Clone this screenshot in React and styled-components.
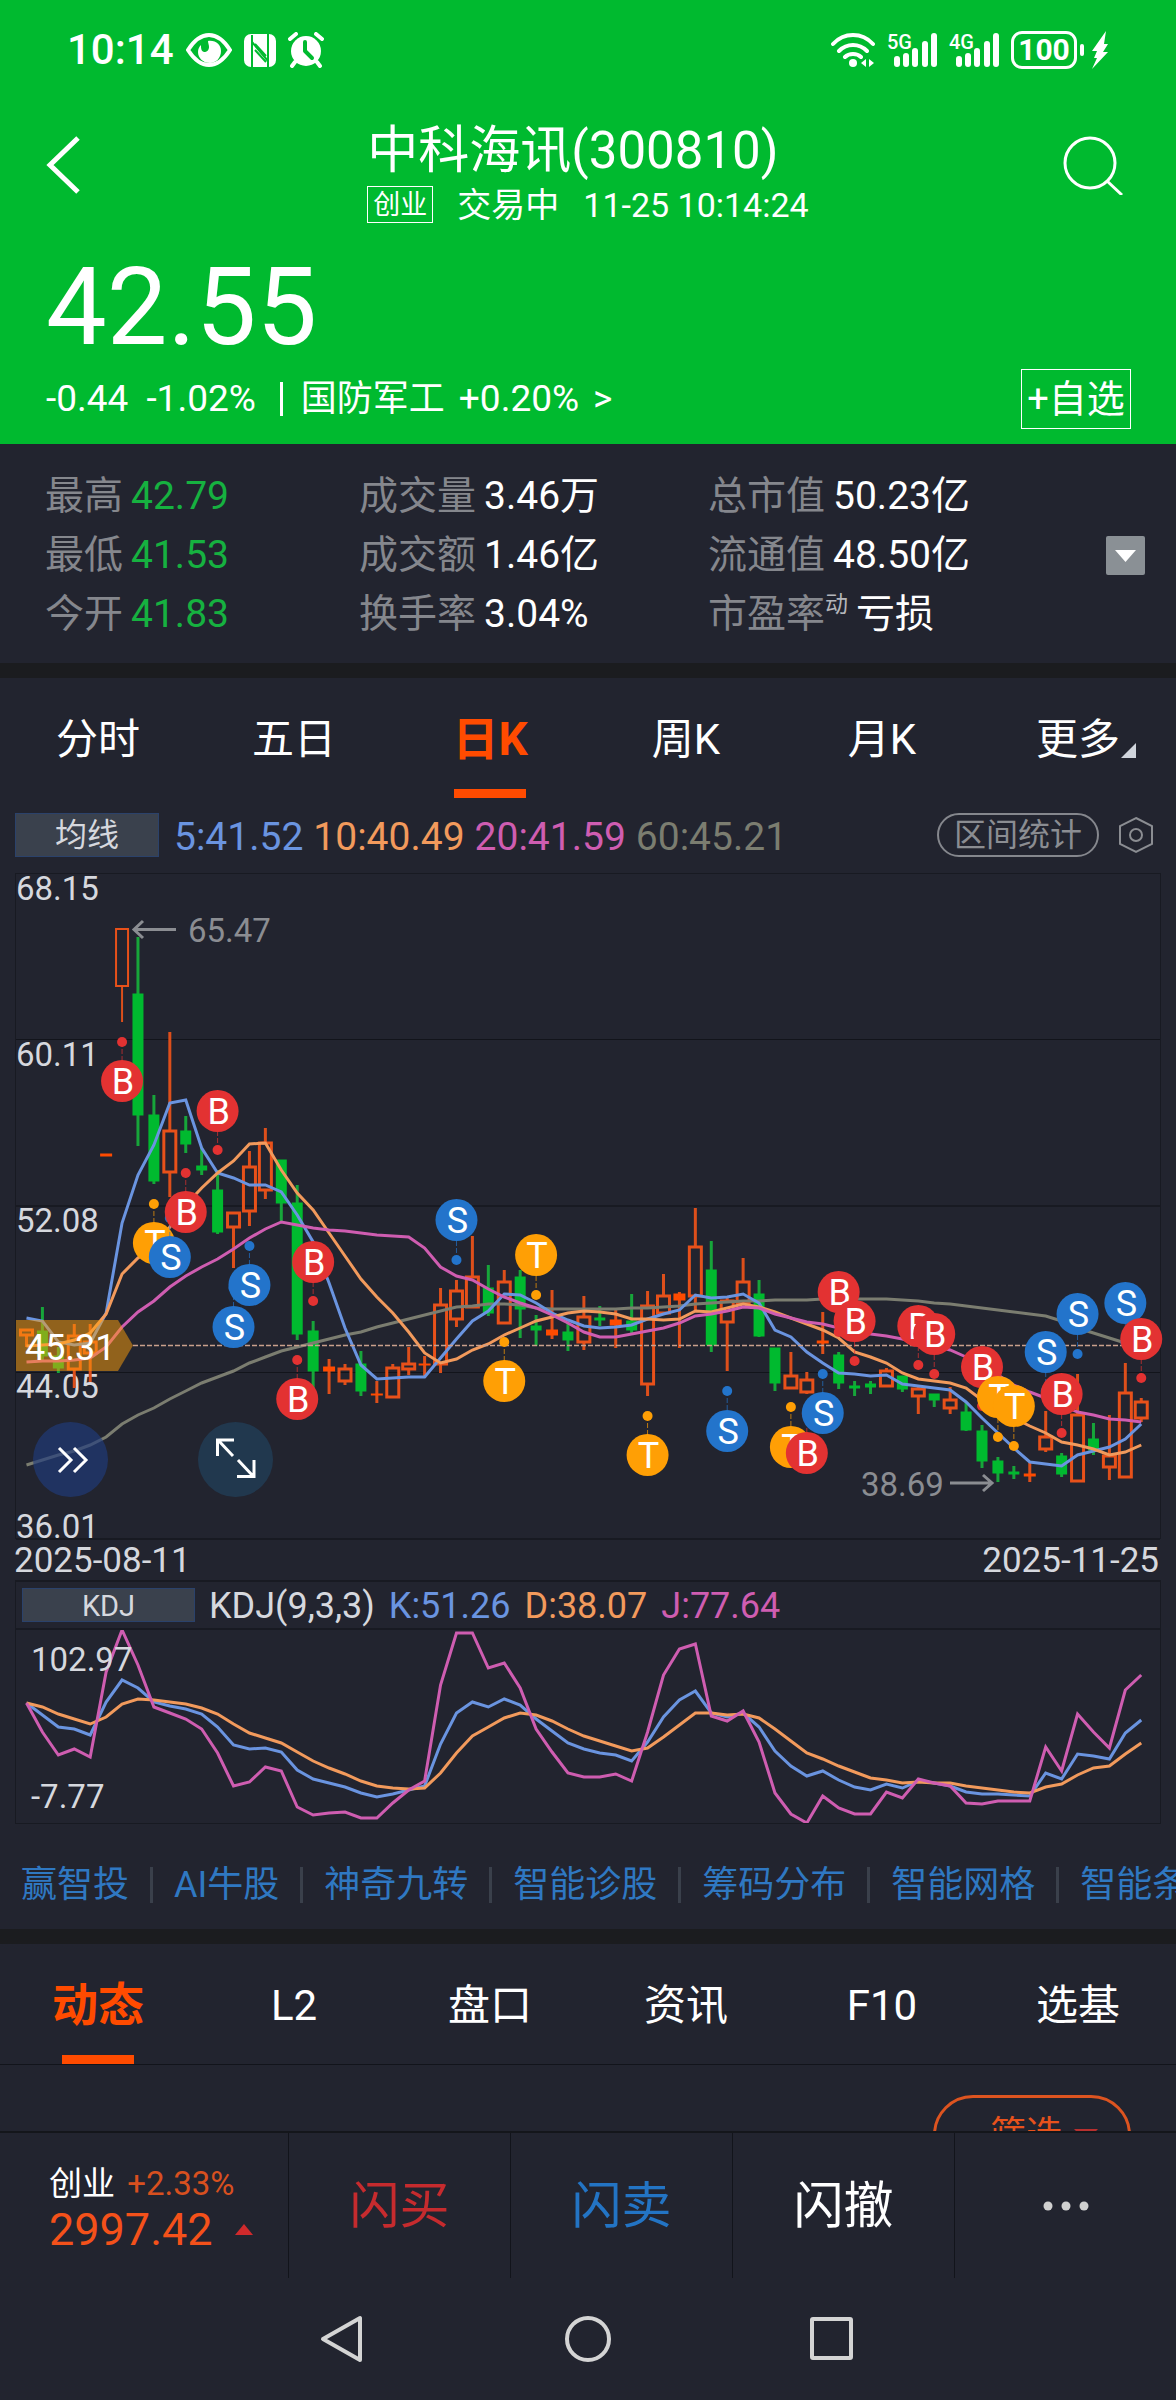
import { Fragment } from 'react';
import styled, { createGlobalStyle } from 'styled-components';

const GREEN = '#00ba2f';
const ORANGE = '#ff4b00';
const RED = '#e33232';
const BLUE = '#2374cb';
const AMBER = '#ff9f05';

const STEP = 15.925;
const xAt = i => 26.5 + i * STEP;

// kind, high, body top, body bottom, low (u = hollow, f = filled, d = down)
const candles = [
    ['u', 460, 460, 465, 477], ['d', 437, 461, 486, 490], ['d', 477, 486, 498, 503],
    ['u', 454, 466, 499, 518], ['u', 454, 472, 483, 512], ['f', 284, 284, 286, 286],
    ['u', 59, 59, 116, 152], ['d', 67, 124, 245, 276], ['d', 225, 245, 311, 314],
    ['u', 162, 261, 302, 327], ['d', 246, 261, 274, 283], ['d', 277, 296, 300, 305],
    ['d', 300, 320, 362, 364], ['u', 343, 343, 357, 398], ['u', 281, 297, 341, 356],
    ['u', 258, 273, 320, 329], ['d', 290, 290, 333, 353], ['d', 315, 333, 464, 470],
    ['d', 451, 461, 501, 518], ['f', 489, 497, 501, 524], ['u', 494, 499, 511, 515],
    ['d', 481, 494, 521, 526], ['f', 511, 524, 525, 533], ['u', 494, 498, 527, 528],
    ['u', 477, 494, 499, 505], ['f', 486, 494, 495, 508], ['u', 418, 435, 494, 503],
    ['u', 410, 421, 449, 457], ['u', 366, 407, 437, 438], ['d', 395, 418, 443, 446],
    ['u', 400, 412, 453, 453], ['d', 400, 407, 439, 468], ['d', 445, 456, 460, 476],
    ['f', 420, 460, 465, 469], ['d', 453, 462, 470, 481], ['u', 426, 447, 472, 480],
    ['d', 436, 448, 450, 456], ['f', 440, 450, 455, 478], ['d', 424, 451, 460, 463],
    ['u', 421, 436, 514, 526], ['u', 404, 426, 443, 444], ['f', 422, 424, 430, 478],
    ['u', 338, 377, 426, 440], ['d', 371, 400, 475, 482], ['u', 426, 431, 452, 501],
    ['u', 388, 412, 433, 434], ['d', 410, 424, 466, 467], ['d', 478, 478, 513, 521],
    ['u', 482, 506, 518, 518], ['u', 502, 510, 522, 524], ['f', 442, 471, 473, 484],
    ['d', 482, 485, 513, 519], ['d', 511, 516, 518, 526], ['d', 511, 514, 517, 524],
    ['u', 498, 501, 516, 517], ['d', 506, 506, 519, 522], ['u', 515, 519, 526, 544],
    ['d', 524, 524, 530, 537], ['u', 517, 530, 538, 544], ['d', 533, 542, 560, 561],
    ['d', 555, 561, 591, 598], ['d', 587, 591, 603, 612], ['d', 596, 602, 604, 609],
    ['f', 593, 604, 606, 612], ['u', 541, 567, 579, 582], ['d', 583, 586, 604, 607],
    ['u', 504, 545, 611, 611], ['d', 553, 569, 580, 585], ['u', 545, 586, 597, 610],
    ['u', 493, 523, 607, 607], ['u', 528, 532, 548, 552],
];

const averages = [
    {
        color: '#7b7d70',
        points: [595, 590, 585, 581, 575, 567, 554, 545, 538, 529, 521, 513, 507, 501, 493, 487, 481, 477, 473, 469, 465, 462, 457, 453, 449, 445, 441, 437, 436, 434, 434, 435, 438, 439, 439, 439, 439, 439, 438, 438, 437, 436, 434, 433, 432, 431, 431, 430, 430, 430, 429, 429, 429, 429, 429, 430, 431, 433, 434, 436, 438, 440, 442, 444, 446, 451, 458, 463, 468, 473, 478],
    },
    {
        color: '#6a94e0',
        points: [448, 451, 472, 475, 473, 443, 353, 305, 275, 233, 230, 278, 303, 308, 315, 315, 322, 345, 372, 413, 458, 495, 509, 508, 507, 507, 488, 469, 451, 441, 424, 425, 433, 443, 450, 456, 458, 457, 455, 449, 444, 440, 425, 428, 427, 424, 433, 460, 467, 482, 493, 503, 504, 506, 505, 514, 516, 518, 520, 532, 548, 563, 578, 592, 594, 596, 585, 581, 577, 569, 554],
    },
    {
        color: '#f29a5c',
        points: [476, 475, 474, 470, 463, 444, 404, 388, 377, 357, 335, 318, 303, 291, 274, 273, 300, 323, 340, 363, 386, 409, 427, 443, 462, 483, 493, 489, 480, 474, 465, 458, 451, 447, 443, 441, 442, 444, 449, 449, 450, 449, 441, 442, 438, 434, 437, 442, 448, 454, 460, 468, 482, 487, 493, 503, 509, 511, 513, 518, 530, 540, 548, 556, 563, 572, 575, 579, 585, 582, 575],
    },
    {
        color: '#cf5db1',
        points: [492, 491, 491, 490, 488, 477, 457, 442, 431, 417, 406, 397, 389, 379, 368, 359, 352, 355, 358, 360, 361, 363, 365, 366, 367, 378, 397, 406, 410, 419, 427, 433, 438, 445, 453, 462, 467, 467, 464, 461, 458, 453, 446, 444, 441, 437, 438, 444, 448, 452, 454, 458, 462, 464, 466, 469, 473, 476, 480, 487, 495, 505, 515, 522, 528, 535, 542, 545, 549, 550, 552],
    },
];

// candle index, letter, badge centre, dot centre
const marks = [
    [6, 'B', 211, 172], [8, 'T', 373, 334], [9, 'S', 387, 348], [10, 'B', 342, 303],
    [12, 'B', 241, 280], [13, 'S', 457, 418], [14, 'S', 415, 376], [17, 'B', 529, 490],
    [18, 'B', 392, 431], [27, 'S', 350, 390], [30, 'T', 511, 472], [32, 'T', 385, 425],
    [39, 'T', 585, 546], [44, 'S', 561, 521], [48, 'T', 577, 537], [49, 'B', 583, 544],
    [50, 'S', 543, 504], [51, 'B', 422, 462], [52, 'B', 451, 491], [56, 'B', 456, 495],
    [57, 'B', 464, 504], [60, 'B', 497, 536], [61, 'T', 527, 567], [62, 'T', 536, 576],
    [64, 'S', 482, 521], [65, 'B', 524, 563], [66, 'S', 444, 484], [69, 'S', 433, 472],
    [70, 'B', 469, 508],
];
const markColors = { B: RED, S: BLUE, T: AMBER };

const kdj = [
    {
        color: '#6a94e0',
        points: [74, 86, 98, 100, 106, 73, 51, 59, 73, 77, 80, 85, 98, 116, 120, 119, 123, 141, 150, 154, 158, 164, 168, 165, 161, 157, 115, 84, 73, 78, 70, 76, 90, 102, 114, 120, 124, 126, 132, 113, 88, 71, 62, 84, 88, 84, 98, 122, 137, 147, 142, 151, 158, 161, 155, 159, 152, 154, 157, 163, 165, 165, 166, 167, 144, 150, 125, 127, 130, 104, 91],
    },
    {
        color: '#f29a5c',
        points: [74, 78, 85, 90, 95, 88, 75, 70, 71, 73, 75, 79, 85, 95, 104, 109, 114, 123, 132, 139, 145, 152, 157, 159, 160, 159, 144, 124, 107, 98, 89, 84, 86, 92, 100, 107, 112, 117, 122, 119, 108, 96, 84, 84, 86, 85, 89, 100, 112, 124, 130, 137, 143, 149, 151, 154, 153, 154, 154, 157, 159, 161, 163, 164, 158, 155, 146, 139, 137, 125, 114],
    },
    {
        color: '#cf5db1',
        points: [74, 103, 126, 120, 128, 43, 1, 36, 78, 84, 90, 100, 124, 157, 153, 138, 142, 178, 186, 184, 183, 189, 189, 174, 161, 152, 56, 4, 4, 39, 34, 59, 100, 123, 144, 148, 148, 145, 152, 103, 46, 20, 15, 87, 92, 82, 113, 164, 185, 194, 167, 179, 185, 185, 163, 169, 150, 154, 157, 174, 175, 172, 172, 172, 118, 142, 85, 103, 119, 61, 46],
    },
];

const toPoints = list => list.map((y, i) => `${xAt(i)},${y}`).join(' ');

const stats = [
    [['最高', '42.79', true], ['最低', '41.53', true], ['今开', '41.83', true]],
    [['成交量', '3.46万'], ['成交额', '1.46亿'], ['换手率', '3.04%']],
    [['总市值', '50.23亿'], ['流通值', '48.50亿'], ['市盈率', '亏损', false, '动']],
];

const periods = ['分时', '五日', '日K', '周K', '月K', '更多'];
const sections = ['动态', 'L2', '盘口', '资讯', 'F10', '选基'];
const tools = ['赢智投', 'AI牛股', '神奇九转', '智能诊股', '筹码分布', '智能网格', '智能条件单'];

const Signal = ({ label }) => (
    <svg width="50" height="36" viewBox="0 0 50 36" fill="#fff" overflow="visible">
        <SignalText x="0" y="17">{label}</SignalText>
        <rect x="7" y="24" width="6" height="11" rx="3" />
        <rect x="16" y="21" width="6" height="14" rx="3" />
        <rect x="25" y="16" width="6" height="19" rx="3" />
        <rect x="35" y="9" width="6" height="26" rx="3" />
        <rect x="44" y="1" width="6" height="34" rx="3" />
    </svg>
);

const StatusIcons = () => (
    <>
        <svg width="46" height="34" viewBox="0 0 46 34">
            <path d="M2 17C9 6 16 2 23 2s14 4 21 15c-7 11-14 15-21 15S9 28 2 17z" fill="none" stroke="#fff" strokeWidth="4" />
            <path d="M22 8c8-1 13 4 13 10 0 7-5 12-11 12-7 0-12-5-12-11 0-3 1-5 3-7 0 3 0 6 3 7 3 0 5-2 5-5 0-2-1-4-1-6z" fill="#fff" />
        </svg>
        <svg width="32" height="34" viewBox="0 0 32 34">
            <rect x="0" y="1" width="32" height="33" rx="7" fill="#fff" />
            <path d="M8 34V2M8 9l16 19M24 34V1" fill="none" stroke={GREEN} strokeWidth="2" />
            <path d="M11 17l11 12M11 11l11 12" fill="none" stroke={GREEN} strokeWidth="2" />
        </svg>
        <svg width="36" height="36" viewBox="0 0 36 36">
            <circle cx="18" cy="19" r="15" fill="#fff" />
            <path d="M2 7l6-5M34 7l-6-5M7 30l-3 4M29 30l3 4" stroke="#fff" strokeWidth="4" strokeLinecap="round" />
            <path d="M17 10v9l7 7" fill="none" stroke={GREEN} strokeWidth="4" strokeLinecap="round" strokeLinejoin="round" />
        </svg>
    </>
);

const PriceChart = () => (
    <ChartBox>
        <Plot viewBox="0 0 1176 672" role="img" aria-label="日K线">
            <g stroke="#181a22" fill="none">
                <rect x="15.5" y="3.5" width="1145" height="665" />
                <path d="M16 169.5H1160M16 502.5H1160" stroke="#12141b" />
                <path d="M16 336H1160M16 669H1160" strokeWidth="2" />
            </g>
            <AxisText x="16" y="30">68.15</AxisText>
            <AxisText x="16" y="196">60.11</AxisText>
            <AxisText x="16" y="362">52.08</AxisText>
            <AxisText x="16" y="528">44.05</AxisText>
            <AxisText x="16" y="668">36.01</AxisText>
            {candles.map(([kind, high, top, bottom, low], i) => {
                const x = xAt(i);
                const up = kind !== 'd';
                return (
                    <Fragment key={i}>
                        <path
                            d={`M${x} ${high}V${top}M${x} ${bottom}V${low}`}
                            stroke={up ? '#dd4f1b' : '#17a53a'}
                            strokeWidth={i === 6 ? 2 : 3}
                        />
                        {kind === 'u'
                            ? <rect x={x - 6} y={top} width="12" height={bottom - top} fill="none" stroke="#e8511a" strokeWidth={i === 6 ? 2 : 3} />
                            : <rect x={x - (up ? 6 : 5.5)} y={top - 0.5} width={up ? 12 : 11} height={bottom - top + 1} fill={up ? ORANGE : GREEN} />}
                    </Fragment>
                );
            })}
            {averages.map(line => (
                <polyline key={line.color} points={toPoints(line.points)} fill="none" stroke={line.color} strokeWidth="3" />
            ))}
            <path d="M133 475.5H1160" stroke="#c9a08c" strokeWidth="1.4" strokeDasharray="5 2" />
            <g stroke="#8b8d92" strokeWidth="3" fill="none">
                <path d="M176 59.5H134M143 51l-9 8.500l9 8.500" />
                <path d="M950 613H992M983 605l9 8l-9 8" />
            </g>
            <AxisText $dim x="188" y="72">65.47</AxisText>
            <AxisText $dim x="861" y="626">38.69</AxisText>
            {marks.map(([i, letter, y, dot]) => (
                <g key={i} fill={markColors[letter]}>
                    <path d={`M${xAt(i)} ${dot}V${y}`} stroke={markColors[letter]} strokeDasharray="5 2" opacity="0.7" />
                    <circle cx={xAt(i)} cy={dot} r="5" />
                    <circle cx={xAt(i)} cy={y} r="21" />
                    <MarkText x={xAt(i) + 1} y={y + 13}>{letter}</MarkText>
                </g>
            ))}
            <path d="M16 450H118L133 475.500L118 501H16z" fill="rgba(255, 160, 10, 0.5)" />
            <TagText x="25" y="490">45.31</TagText>
        </Plot>
        <RoundButton $left={33} $tint="rgba(32, 60, 125, 0.65)" aria-label="展开">
            <svg width="75" height="75" viewBox="0 0 75 75" fill="none" stroke="#fff" strokeWidth="3">
                <path d="M26 26l12 12l-12 12M41 26l12 12l-12 12" />
            </svg>
        </RoundButton>
        <RoundButton $left={198} $tint="rgba(34, 70, 100, 0.6)" aria-label="全屏">
            <svg width="75" height="75" viewBox="0 0 75 75" fill="none" stroke="#fff" strokeWidth="3">
                <path d="M36 18H19.500V34M20 18L35 34M39 54.500H56V38M55 54L40 38" />
            </svg>
        </RoundButton>
    </ChartBox>
);

const TabBar = ({ items, active, more, line }) => (
    <Tabs $line={line}>
        {items.map(item => (
            <Tab key={item} $active={item === active}>
                <TabLabel>
                    {item}
                    {item === more && (
                        <Corner width="15" height="15" viewBox="0 0 15 15"><path d="M15 0V15H0z" fill="#d0d4dc" /></Corner>
                    )}
                </TabLabel>
                <TabLine $active={item === active} />
            </Tab>
        ))}
    </Tabs>
);

const App = () => {
    return (
        <Page>
            <GlobalStyle />
            <Header>
                <StatusBar>
                    <StatusGroup>
                        <Clock>10:14</Clock>
                        <StatusIcons />
                    </StatusGroup>
                    <StatusGroup>
                        <svg width="44" height="36" viewBox="0 0 44 36" fill="none" stroke="#fff" strokeWidth="4" strokeLinecap="round">
                            <path d="M2 12C13 0 31 0 42 12M8 19c8-8 20-8 28 0M14 25c4-4 12-4 16 0" />
                            <circle cx="22" cy="31" r="4" fill="#fff" stroke="none" />
                            <path d="M30 31l5-4v8zM43 31l-5-4v8z" fill="#fff" stroke="none" />
                        </svg>
                        <Signal label="5G" />
                        <Signal label="4G" />
                        <BatteryGroup>
                            <Battery>100</Battery>
                            <BatteryCap />
                            <svg width="18" height="38" viewBox="0 0 18 38" fill="#fff">
                                <path d="M15 0L1 20h5l-3 7h3L1 38L17 21h-5l5-8h-4z" />
                            </svg>
                        </BatteryGroup>
                    </StatusGroup>
                </StatusBar>
                <TitleRow>
                    <IconButton aria-label="返回">
                        <svg width="34" height="58" viewBox="0 0 34 58" fill="none" stroke="#fff" strokeWidth="5">
                            <path d="M32 2L4 29L32 56" />
                        </svg>
                    </IconButton>
                    <div>
                        <Title>中科海讯(300810)</Title>
                        <SubTitle>
                            <Board>创业</Board>
                            <span>交易中</span>
                            <time>11-25 10:14:24</time>
                        </SubTitle>
                    </div>
                    <IconButton $end aria-label="搜索">
                        <svg width="68" height="60" viewBox="0 0 68 60" fill="none" stroke="#fff" strokeWidth="3">
                            <circle cx="28" cy="28" r="25" />
                            <path d="M45 46L60 60" />
                        </svg>
                    </IconButton>
                </TitleRow>
                <Price>42.55</Price>
                <ChangeRow>
                    <span>-0.44</span>
                    <span>-1.02%</span>
                    <Bar />
                    <Sector href="#sector">
                        <SectorName>国防军工</SectorName>
                        <span>+0.20%</span>
                        <span>&gt;</span>
                    </Sector>
                    <AddButton>+自选</AddButton>
                </ChangeRow>
            </Header>
            <Stats>
                {stats.map((column, i) => (
                    <dl key={i}>
                        {column.map(([name, value, down, note]) => (
                            <Stat key={name}>
                                <dt>{name}{note && <Note>{note}</Note>}</dt>
                                <StatValue $down={down}>{value}</StatValue>
                            </Stat>
                        ))}
                    </dl>
                ))}
                <Expand aria-label="更多指标">
                    <svg width="21" height="12" viewBox="0 0 21 12"><path d="M0 0H21L10.500 12z" fill="#fff" /></svg>
                </Expand>
            </Stats>
            <Band />
            <TabBar items={periods} active="日K" more="更多" />
            <Averages>
                <MaButton>均线</MaButton>
                <Reading $color="#6a94e0">5:41.52</Reading>
                <Reading $color="#f29a5c">10:40.49</Reading>
                <Reading $color="#cf5db1">20:41.59</Reading>
                <Reading $color="#7b7d70">60:45.21</Reading>
                <RangeButton>区间统计</RangeButton>
                <GearButton aria-label="设置">
                    <svg width="34" height="38" viewBox="0 0 34 38" fill="none" stroke="#8b8d92" strokeWidth="2">
                        <path d="M17 2L33 10V28L17 36L1 28V10z" />
                        <circle cx="17" cy="19" r="6" />
                    </svg>
                </GearButton>
            </Averages>
            <PriceChart />
            <Dates>
                <time>2025-08-11</time>
                <time>2025-11-25</time>
            </Dates>
            <KdjPanel>
                <KdjHead>
                    <KdjButton>KDJ</KdjButton>
                    <KdjValue $color="#d6d8de">KDJ(9,3,3)</KdjValue>
                    <KdjValue $color="#6a94e0">K:51.26</KdjValue>
                    <KdjValue $color="#f29a5c">D:38.07</KdjValue>
                    <KdjValue $color="#cf5db1">J:77.64</KdjValue>
                </KdjHead>
                <Plot viewBox="16 1 1144 193" role="img" aria-label="KDJ">
                    {kdj.map(line => (
                        <polyline key={line.color} points={toPoints(line.points)} fill="none" stroke={line.color} strokeWidth="3" />
                    ))}
                    <AxisText x="31" y="42">102.97</AxisText>
                    <AxisText x="31" y="179">-7.77</AxisText>
                </Plot>
            </KdjPanel>
            <Tools>
                {tools.map((tool, i) => (
                    <Fragment key={tool}>
                        {i > 0 && <ToolLine />}
                        <Tool href="#tool">{tool}</Tool>
                    </Fragment>
                ))}
            </Tools>
            <Band />
            <TabBar items={sections} active="动态" line />
            <Feed>
                <FilterButton>
                    筛选
                    <svg width="24" height="13" viewBox="0 0 24 13"><path d="M0 0H24L12 13z" fill="#b8302f" /></svg>
                </FilterButton>
            </Feed>
            <TradeBar>
                <IndexButton>
                    <IndexLine>创业 <Rise>+2.33%</Rise></IndexLine>
                    <IndexValue>
                        2997.42
                        <svg width="18" height="11" viewBox="0 0 18 11"><path d="M0 11H18L9 0z" fill="#d02a2c" /></svg>
                    </IndexValue>
                </IndexButton>
                <TradeButton $color="#c62b2e">闪买</TradeButton>
                <TradeButton $color="#2374c4">闪卖</TradeButton>
                <TradeButton $color="#fff">闪撤</TradeButton>
                <TradeButton $color="#d0d0d0" aria-label="更多">
                    <svg width="46" height="10" viewBox="0 0 46 10" fill="#d0d0d0">
                        <circle cx="5" cy="5" r="4.5" />
                        <circle cx="23" cy="5" r="4.5" />
                        <circle cx="41" cy="5" r="4.5" />
                    </svg>
                </TradeButton>
            </TradeBar>
            <SystemNav>
                <SystemButton aria-label="后退">
                    <svg width="48" height="48" viewBox="0 0 48 48" fill="none" stroke="#d4d4d4" strokeWidth="4" strokeLinejoin="round">
                        <path d="M40 3V45L3 24z" />
                    </svg>
                </SystemButton>
                <SystemButton aria-label="主页">
                    <svg width="48" height="48" viewBox="0 0 48 48" fill="none" stroke="#d4d4d4" strokeWidth="4">
                        <circle cx="24" cy="24" r="21" />
                    </svg>
                </SystemButton>
                <SystemButton aria-label="最近任务">
                    <svg width="48" height="48" viewBox="0 0 48 48" fill="none" stroke="#d4d4d4" strokeWidth="4" strokeLinejoin="round">
                        <rect x="4" y="4" width="39" height="39" rx="1" />
                    </svg>
                </SystemButton>
            </SystemNav>
        </Page>
    )
}

export default App;


const GlobalStyle = createGlobalStyle`
    * {
        box-sizing: border-box;
    }
    body {
        margin: 0;
        background: #22242f;
    }
    body, button {
        font-family: Roboto, 'Noto Sans CJK SC', sans-serif;
    }
    button {
        margin: 0;
        padding: 0;
        border: none;
        background: none;
        color: inherit;
        cursor: pointer;
    }
    a {
        color: inherit;
        text-decoration: none;
    }
    dl, dd, h1 {
        margin: 0;
        font-weight: 400;
    }
    svg {
        display: block;
    }
`
const Page = styled.div`
    min-height: 100vh;
    background: #22242f;
    color: #fff;
    overflow: hidden;
`
const Header = styled.header`
    background: ${GREEN};
    padding-bottom: 15px;
`
const StatusBar = styled.div`
    display: flex;
    justify-content: space-between;
    align-items: center;
    height: 100px;
    padding: 0 67px;
`
const StatusGroup = styled.div`
    display: flex;
    align-items: center;
    gap: 12px;
`
const Clock = styled.span`
    font-size: 42px;
    line-height: 50px;
    font-weight: 500;
`
const SignalText = styled.text`
    font-size: 20px;
    font-weight: 500;
`
const BatteryGroup = styled.div`
    display: flex;
    align-items: center;
    gap: 3px;
`
const Battery = styled.span`
    width: 66px;
    height: 38px;
    border: 3px solid #fff;
    border-radius: 11px;
    font-size: 30px;
    line-height: 32px;
    font-weight: 700;
    text-align: center;
`
const BatteryCap = styled.span`
    width: 4px;
    height: 12px;
    margin-right: 4px;
    border-radius: 2px;
    background: #fff;
`
const TitleRow = styled.div`
    display: grid;
    grid-template-columns: 1fr auto 1fr;
    align-items: center;
    margin-top: 7px;
    padding: 0 46px;
`
const IconButton = styled.button`
    justify-self: ${props => props.$end ? 'end' : 'start'};
`
const Title = styled.h1`
    padding-top: 8px;
    font-size: 51px;
    line-height: 71px;
`
const SubTitle = styled.div`
    display: flex;
    align-items: center;
    height: 37px;
    font-size: 34px;
    line-height: 36px;
    span + span {
        margin: 0 24px;
    }
`
const Board = styled.span`
    width: 66px;
    height: 37px;
    border: 1px solid #fff;
    font-size: 27px;
    line-height: 36px;
    text-align: center;
`
const Price = styled.div`
    margin-top: 24px;
    padding-left: 46px;
    font-size: 108px;
    line-height: 120px;
`
const ChangeRow = styled.div`
    display: flex;
    align-items: center;
    gap: 18px;
    margin-top: 2px;
    padding: 0 45px 0 46px;
    font-size: 37px;
    line-height: 60px;
`
const Bar = styled.span`
    width: 3px;
    height: 34px;
    margin-left: 6px;
    background: #fff;
`
const Sector = styled.a`
    display: flex;
    gap: 14px;
`
const SectorName = styled.span`
    font-size: 36px;
`
const AddButton = styled.button`
    width: 110px;
    height: 60px;
    margin-left: auto;
    border: 1px solid #fff;
    font-size: 38px;
    line-height: 56px;
`
const Stats = styled.section`
    display: grid;
    grid-template-columns: 314fr 349fr 398fr 39px;
    align-items: center;
    padding: 23px 31px 19px 45px;
    font-size: 39px;
    line-height: 59px;
`
const Stat = styled.div`
    display: flex;
    gap: 8px;
    white-space: nowrap;
    dt {
        display: flex;
        color: #85878d;
    }
`
const StatValue = styled.dd`
    color: ${props => props.$down ? '#16b140' : '#fff'};
`
const Note = styled.span`
    font-size: 23px;
    line-height: 40px;
    color: #b4b6bb;
`
const Expand = styled.button`
    display: flex;
    align-items: center;
    justify-content: center;
    height: 39px;
    border-radius: 2px;
    background: #8a9095;
`
const Band = styled.div`
    height: 15px;
    background: #1b1c1f;
`
const Tabs = styled.nav`
    display: grid;
    grid-template-columns: repeat(6, 1fr);
    border-bottom: ${props => props.$line ? '1px solid #12141b' : 'none'};
`
const Tab = styled.button`
    display: flex;
    flex-direction: column;
    align-items: center;
    padding-top: 12px;
    font-size: ${props => props.$active ? 46 : 42}px;
    font-weight: ${props => props.$active ? 700 : 400};
    color: ${props => props.$active ? ORANGE : '#fff'};
`
const TabLabel = styled.span`
    position: relative;
    line-height: 99px;
`
const TabLine = styled.span`
    width: 72px;
    height: 9px;
    background: ${props => props.$active ? ORANGE : 'transparent'};
`
const Corner = styled.svg`
    position: absolute;
    right: -16px;
    bottom: 31px;
`
const Averages = styled.div`
    display: flex;
    align-items: center;
    gap: 10px;
    margin-top: 15px;
    padding: 0 23px 0 15px;
`
const MaButton = styled.button`
    width: 144px;
    height: 44px;
    margin-right: 5px;
    border: 1px solid #2b426b;
    background: #3a414d;
    font-size: 32px;
    line-height: 42px;
    color: #d6d8de;
`
const Reading = styled.span`
    padding-top: 4px;
    font-size: 39px;
    line-height: 40px;
    color: ${props => props.$color};
`
const RangeButton = styled.button`
    width: 162px;
    height: 44px;
    margin-left: auto;
    border: 2px solid #85878d;
    border-radius: 22px;
    font-size: 32px;
    line-height: 40px;
    color: #8b8d92;
`
const GearButton = styled.button`
    margin-left: 10px;
`
const ChartBox = styled.div`
    position: relative;
    margin-top: 13px;
`
const Plot = styled.svg`
    width: 100%;
    height: auto;
`
const AxisText = styled.text`
    font-size: 33px;
    fill: ${props => props.$dim ? '#8b8d92' : '#d6d8de'};
`
const MarkText = styled.text`
    font-size: 36px;
    fill: #fff;
    text-anchor: middle;
`
const TagText = styled.text`
    font-size: 36px;
    fill: #fff;
`
const RoundButton = styled.button`
    position: absolute;
    left: ${props => props.$left}px;
    bottom: 45px;
    border-radius: 50%;
    background: ${props => props.$tint};
`
const Dates = styled.div`
    display: flex;
    justify-content: space-between;
    padding: 0 17px 0 14px;
    font-size: 35px;
    line-height: 38px;
    color: #d6d8de;
`
const KdjPanel = styled.section`
    margin: 0 15px;
    border: 1px solid #181a22;
    border-top-width: 2px;
`
const KdjHead = styled.div`
    display: flex;
    align-items: center;
    gap: 14px;
    height: 48px;
    padding-left: 6px;
    border-bottom: 2px solid #181a22;
`
const KdjButton = styled.button`
    width: 173px;
    height: 34px;
    border: 1px solid #2b426b;
    background: #3a414d;
    font-size: 29px;
    line-height: 34px;
    color: #d6d8de;
`
const KdjValue = styled.span`
    padding-top: 2px;
    font-size: 36px;
    line-height: 44px;
    color: ${props => props.$color};
`
const Tools = styled.nav`
    display: flex;
    align-items: center;
    gap: 21px;
    padding: 43px 0 26px 21px;
    overflow: hidden;
`
const Tool = styled.a`
    flex: none;
    font-size: 36px;
    line-height: 36px;
    color: #2f78c2;
`
const ToolLine = styled.span`
    flex: none;
    width: 3px;
    height: 36px;
    background: #3a404b;
`
const Feed = styled.div`
    display: flex;
    justify-content: flex-end;
    align-items: flex-start;
    height: 66px;
    padding: 30px 45px 0;
    overflow: hidden;
`
const FilterButton = styled.button`
    display: flex;
    flex: none;
    align-items: center;
    justify-content: center;
    gap: 12px;
    width: 198px;
    height: 80px;
    padding-left: 24px;
    border: 3px solid #dd5420;
    border-radius: 40px;
    font-size: 36px;
    line-height: 72px;
    color: #e8521c;
`
const TradeBar = styled.div`
    display: grid;
    grid-template-columns: 288fr repeat(4, 222fr);
    height: 147px;
    border-top: 2px solid #14161b;
`
const IndexButton = styled.button`
    display: flex;
    flex-direction: column;
    justify-content: center;
    align-items: flex-start;
    padding: 4px 0 0 49px;
    white-space: nowrap;
`
const IndexLine = styled.span`
    font-size: 33px;
    line-height: 44px;
`
const Rise = styled.span`
    margin-left: 4px;
    color: #d8501f;
`
const IndexValue = styled.span`
    display: flex;
    align-items: center;
    gap: 22px;
    font-size: 45px;
    line-height: 48px;
    color: #f4511a;
`
const TradeButton = styled.button`
    display: flex;
    align-items: center;
    justify-content: center;
    border-left: 1px solid #12141b;
    font-size: 50px;
    line-height: 60px;
    color: ${props => props.$color};
`
const SystemNav = styled.nav`
    display: flex;
    justify-content: center;
    align-items: center;
    gap: 196px;
    height: 122px;
`
const SystemButton = styled.button`
    width: 48px;
    height: 48px;
`
